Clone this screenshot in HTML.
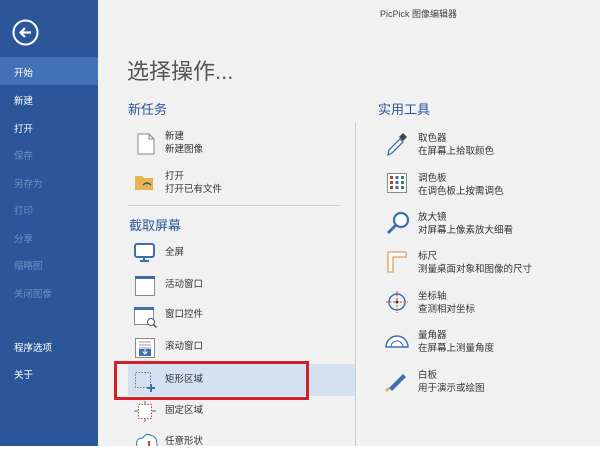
<!DOCTYPE html><html><head><meta charset="utf-8"><style>
*{margin:0;padding:0;box-sizing:border-box}
body{width:600px;height:463px;overflow:hidden;background:#fff;font-family:"Liberation Sans","Noto Sans CJK SC",sans-serif;position:relative}
.side{position:absolute;left:0;top:0;width:98px;height:446px;background:#2b579a}
.main{position:absolute;left:98px;top:0;width:502px;height:446px;background:#f1f1f1}
.a{position:absolute;white-space:nowrap}
.s{font-size:9.5px;color:#fff;left:14px}
.s.d{color:#6f8fc2}
.h{font-size:13px;color:#2b579a}
.t{font-size:9.5px;color:#333;line-height:13px}
</style></head><body>
<div class="side">
<svg class="a" style="left:12px;top:19px" width="27" height="27"><circle cx="13.5" cy="13.5" r="12" fill="none" stroke="#fff" stroke-width="2"/><path d="M19 13.5H9M13 9l-4.5 4.5L13 18" fill="none" stroke="#fff" stroke-width="2.2"/></svg>
<div class="a" style="left:0;top:57px;width:98px;height:28px;background:#4271b5"></div>
<div class="a s" style="top:65px">开始</div>
<div class="a s" style="top:93px">新建</div>
<div class="a s" style="top:121px">打开</div>
<div class="a s d" style="top:148px">保存</div>
<div class="a s d" style="top:176px">另存为</div>
<div class="a s d" style="top:203px">打印</div>
<div class="a s d" style="top:231px">分享</div>
<div class="a s d" style="top:258px">缩略图</div>
<div class="a s d" style="top:286px">关闭图像</div>
<div class="a s" style="top:340px">程序选项</div>
<div class="a s" style="top:367px">关于</div>
</div>
<div class="main"></div>
<div class="a" style="left:380px;top:7px;font-size:9px;color:#444">PicPick 图像编辑器</div>
<div class="a" style="left:127px;top:54px;font-size:22px;color:#555">选择操作...</div>
<div class="a h" style="left:128px;top:99px">新任务</div>
<div class="a h" style="left:378px;top:99px">实用工具</div>
<div class="a" style="left:355px;top:123px;width:1px;height:323px;background:#ccc"></div>
<div class="a" style="left:128px;top:205px;width:212px;height:1px;background:#ccc"></div>
<div class="a h" style="left:129px;top:215px">截取屏幕</div>
<div class="a" style="left:128px;top:364px;width:227px;height:32px;background:#d5e1f1"></div>
<div class="a" style="left:114px;top:361px;width:195px;height:39px;border:3px solid #d2202a"></div>
<!-- left icons -->
<svg class="a" style="left:137px;top:133px" width="18" height="22"><path d="M1 1h11l5 5v15H1z M12 1v5h5" fill="#fff" stroke="#888"/></svg>
<svg class="a" style="left:134px;top:172px" width="24" height="20"><path d="M1 4h7l2 2h9v12H1z" fill="#e8b54c"/><path d="M9 13q4-4 8 0" stroke="#2b579a" fill="none" stroke-width="1.5"/></svg>
<div class="a t" style="left:165px;top:130px">新建<br>新建图像</div>
<div class="a t" style="left:165px;top:170px">打开<br>打开已有文件</div>
<svg class="a" style="left:134px;top:243px" width="22" height="20"><rect x="1" y="1" width="19" height="13" rx="2" fill="#fff" stroke="#3a70b0" stroke-width="2"/><path d="M10 15v2M6 18h9" stroke="#3a70b0" stroke-width="2"/></svg>
<svg class="a" style="left:135px;top:276px" width="20" height="20"><rect x=".5" y=".5" width="19" height="19" fill="#fff" stroke="#888"/><rect x="0" y="0" width="20" height="3" fill="#3a70b0"/></svg>
<svg class="a" style="left:134px;top:307px" width="24" height="22"><rect x=".5" y=".5" width="19" height="17" fill="#fff" stroke="#888"/><rect x="0" y="0" width="20" height="3" fill="#3a70b0"/><circle cx="17" cy="15" r="3.5" fill="#fff" stroke="#555"/><path d="M19.5 17.5l3 3" stroke="#555" stroke-width="1.5"/></svg>
<svg class="a" style="left:135px;top:338px" width="20" height="20"><rect x=".5" y=".5" width="19" height="19" fill="#fff" stroke="#888"/><path d="M4 4h12M4 7h12M4 10h12" stroke="#999"/><rect x="4" y="11" width="12" height="7" fill="#3a70b0"/><path d="M10 11v5M7.5 13.5L10 16l2.5-2.5" stroke="#fff" fill="none"/></svg>
<svg class="a" style="left:134px;top:371px" width="22" height="22"><rect x="1.5" y="1.5" width="15" height="15" fill="none" stroke="#777" stroke-dasharray="1.5 1.5"/><path d="M17 13v8M13 17h8" stroke="#3a70b0" stroke-width="2"/></svg>
<svg class="a" style="left:134px;top:401px" width="22" height="22"><rect x="4.5" y="3.5" width="13" height="14" fill="#fff" stroke="#d04030" stroke-dasharray="1.5 1.5"/><path d="M11 0v3M11 18v3M0 10h4M18 10h4" stroke="#3a70b0"/></svg>
<svg class="a" style="left:134px;top:432px" width="24" height="14"><path d="M3 14q-2-8 6-8q3-6 9-2q5 0 5 10" fill="#fff" stroke="#3a70b0"/><path d="M15 9v5" stroke="#d04030" stroke-width="2"/></svg>
<div class="a t" style="left:165px;top:246px">全屏</div>
<div class="a t" style="left:165px;top:278px">活动窗口</div>
<div class="a t" style="left:165px;top:308px">窗口控件</div>
<div class="a t" style="left:165px;top:340px">滚动窗口</div>
<div class="a t" style="left:165px;top:373px">矩形区域</div>
<div class="a t" style="left:165px;top:404px">固定区域</div>
<div class="a t" style="left:165px;top:435px">任意形状</div>
<!-- right icons -->
<svg class="a" style="left:385px;top:131px" width="24" height="26"><path d="M3 24l1-5 11-11 3 3-11 11z" fill="#fff" stroke="#3a70b0" stroke-width="1.3"/><path d="M14 6l4-4 4 4-4 4z" fill="#444"/></svg>
<svg class="a" style="left:387px;top:173px" width="20" height="20"><rect x=".5" y=".5" width="19" height="19" fill="#fff" stroke="#888"/><g fill="#c0392b"><rect x="3" y="3" width="3" height="3"/><rect x="3" y="8" width="3" height="3"/><rect x="3" y="13" width="3" height="3"/></g><g fill="#3a70b0"><rect x="8.5" y="3" width="3" height="3"/><rect x="8.5" y="8" width="3" height="3"/><rect x="8.5" y="13" width="3" height="3"/></g><g fill="#2e8b57"><rect x="14" y="3" width="3" height="3"/><rect x="14" y="8" width="3" height="3"/><rect x="14" y="13" width="3" height="3"/></g></svg>
<svg class="a" style="left:386px;top:211px" width="24" height="24"><circle cx="15" cy="9" r="7" fill="#fff" stroke="#3a70b0" stroke-width="2.2"/><path d="M10 14l-8 8" stroke="#3a70b0" stroke-width="3"/></svg>
<svg class="a" style="left:387px;top:251px" width="20" height="22"><path d="M1 1h18v5H6v15H1z" fill="#fff" stroke="#e0a050" stroke-width="1.3"/></svg>
<svg class="a" style="left:385px;top:290px" width="24" height="24"><circle cx="12" cy="12" r="8" fill="none" stroke="#3a70b0" stroke-width="1.5"/><path d="M12 1v22M1 12h22" stroke="#d04030" stroke-dasharray="2 1.5"/><circle cx="12" cy="12" r="1.5" fill="#333"/></svg>
<svg class="a" style="left:385px;top:333px" width="24" height="16"><path d="M1 14a11 11 0 0 1 22 0z" fill="#fff" stroke="#3a70b0" stroke-width="1.5"/><path d="M6 14a6 6 0 0 1 12 0" fill="none" stroke="#3a70b0"/></svg>
<svg class="a" style="left:385px;top:370px" width="24" height="22"><path d="M4 18l14-14 3 3-14 14z" fill="#3a70b0"/><path d="M1 21l3-3" stroke="#e0a050" stroke-width="2"/></svg>
<div class="a t" style="left:418px;top:132px">取色器<br>在屏幕上拾取颜色</div>
<div class="a t" style="left:418px;top:172px">调色板<br>在调色板上按需调色</div>
<div class="a t" style="left:418px;top:211px">放大镜<br>对屏幕上像素放大细看</div>
<div class="a t" style="left:418px;top:250px">标尺<br>测量桌面对象和图像的尺寸</div>
<div class="a t" style="left:418px;top:290px">坐标轴<br>查测相对坐标</div>
<div class="a t" style="left:418px;top:329px">量角器<br>在屏幕上测量角度</div>
<div class="a t" style="left:418px;top:369px">白板<br>用于演示或绘图</div>
</body></html>
